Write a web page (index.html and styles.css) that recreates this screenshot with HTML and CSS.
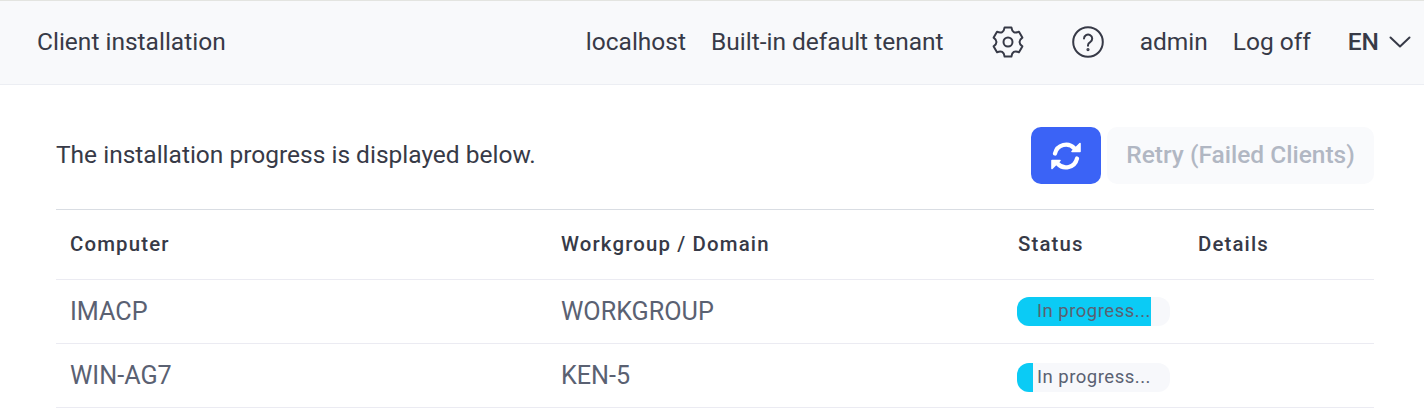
FILE: index.html
```html
<!DOCTYPE html>
<html lang="en">
<head>
<meta charset="utf-8">
<title>Client installation</title>
<link rel="stylesheet" href="styles.css">
</head>
<body>
<header class="topbar">
  <div class="topbar-title">Client installation</div>
  <nav class="topbar-nav">
    <span class="nav-host">localhost</span>
    <span class="nav-tenant">Built-in default tenant</span>
    <svg class="icon icon-gear" viewBox="0 0 40 40" fill="none" stroke="currentColor" stroke-width="2" stroke-linecap="round" stroke-linejoin="round"><path d="M16.6 5.4 23.4 5.4Q24.35 12.47 30.97 9.77L34.34 15.61Q28.7 20 34.34 24.39L30.97 30.23Q24.35 27.53 23.4 34.6L16.6 34.6Q15.65 27.53 9.03 30.23L5.66 24.39Q11.3 20 5.66 15.61L9.03 9.77Q15.65 12.47 16.6 5.4Z"/><circle cx="20" cy="20" r="4.500"/></svg>
    <svg class="icon icon-help" viewBox="0 0 32 32" fill="none" stroke="currentColor" stroke-width="2" stroke-linecap="round"><circle cx="16" cy="16" r="14.800"/><path d="M12 12.600a4.100 4.100 0 1 1 6.200 3.500c-1.300.8-2.200 1.600-2.200 3.200v.4"/><circle cx="16" cy="23.600" r=".6" fill="currentColor"/></svg>
    <span class="nav-user">admin</span>
    <span class="nav-logoff">Log off</span>
    <span class="nav-lang">EN</span>
    <svg class="icon-chevron" viewBox="0 0 22 12" fill="none" stroke="currentColor" stroke-width="2" stroke-linecap="round" stroke-linejoin="round"><path d="M1.500 1.500 11 10.500l9.500-9"/></svg>
  </nav>
</header>
<main class="content">
  <div class="toolbar">
    <p class="toolbar-text">The installation progress is displayed below.</p>
    <div class="toolbar-actions">
      <button class="btn btn-refresh" type="button" aria-label="Refresh">
        <svg viewBox="0 0 30 30" class="icon-sync"><path class="sync-arc" d="M4 12.500A11.300 11.300 0 0 1 23.500 7.500"/><path class="sync-arrow" d="M29 2.500V10.500H21Z"/><path class="sync-arc" d="M26 17.500A11.300 11.300 0 0 1 6.500 22.500"/><path class="sync-arrow" d="M1 27.500V19.500H9Z"/></svg>
      </button>
      <button class="btn btn-retry" type="button" disabled>Retry (Failed Clients)</button>
    </div>
  </div>
  <table class="clients">
    <thead>
      <tr><th class="col-computer">Computer</th><th class="col-group">Workgroup / Domain</th><th class="col-status">Status</th><th>Details</th></tr>
    </thead>
    <tbody>
      <tr>
        <td>IMACP</td><td>WORKGROUP</td>
        <td><div class="progress"><div class="progress-fill" style="width:87.6%"></div><span class="progress-label">In progress...</span></div></td>
        <td></td>
      </tr>
      <tr>
        <td>WIN-AG7</td><td>KEN-5</td>
        <td><div class="progress progress-low"><div class="progress-fill" style="width:10.5%"></div><span class="progress-label">In progress...</span></div></td>
        <td></td>
      </tr>
    </tbody>
  </table>
</main>
</body>
</html>
```
FILE: styles.css
```css
* { box-sizing: border-box; }
html, body { margin: 0; padding: 0; }
body {
  font-family: Roboto, "Liberation Sans", sans-serif;
  background: #fff;
  color: #373a47;
  height: 419px;
  overflow: hidden;
}
.topbar {
  height: 85px;
  background: #f8f9fb;
  border-top: 1px solid #e3e4e0;
  border-bottom: 1px solid #eceef3;
  display: flex;
  align-items: center;
  justify-content: space-between;
  padding: 0 0 3px 37px;
  font-size: 24.5px;
}
.topbar-nav { display: flex; align-items: center; }
.nav-host { margin-right: 25px; }
.nav-tenant { margin-right: 44px; }
.icon { display: block; flex: none; color: #373a47; margin-top: 2px; }
.icon-gear { width: 40px; height: 40px; margin-right: 44px; }
.icon-help { width: 32px; height: 32px; margin-right: 36px; }
.nav-user { margin-right: 25px; }
.nav-logoff { margin-right: 37px; }
.nav-lang { font-weight: 500; margin-right: 10px; }
.icon-chevron { width: 22px; height: 12px; margin: 2px 13px 0 0; display: block; }
.content { padding: 42px 50px 0 56px; }
.toolbar {
  height: 83px;
  display: flex;
  justify-content: space-between;
  align-items: flex-start;
  border-bottom: 1px solid #d9dde3;
}
.toolbar-text { margin: 0; font-size: 24.5px; line-height: 56px; color: #373a47; }
.toolbar-actions { display: flex; gap: 6px; }
.btn { height: 57px; border: 0; border-radius: 10px; font-family: inherit; padding: 0; }
.btn-refresh { width: 70px; background: #3b63f6; color: #fff; display: flex; align-items: center; justify-content: center; }
.icon-sync { width: 30px; height: 30px; display: block; }
.sync-arc { fill: none; stroke: currentColor; stroke-width: 4.200; stroke-linecap: round; }
.sync-arrow { fill: currentColor; stroke: currentColor; stroke-width: 1.600; stroke-linejoin: round; }
.btn-retry { width: 267px; background: #f9fafc; color: #b1b7c3; font-size: 24.5px; font-weight: 500; padding-bottom: 2px; }
.clients { width: 100%; border-collapse: collapse; table-layout: fixed; }
.clients th {
  height: 69px;
  padding: 0 14px;
  text-align: left;
  font-size: 20.4px;
  font-weight: 500;
  letter-spacing: 1.150px;
  color: #373a47;
  border-bottom: 1px solid #ebebf2;
}
.clients td {
  height: 64px;
  padding: 0 14px;
  font-size: 25.2px;
  color: #5a6172;
  border-bottom: 1px solid #ebebf2;
}
.col-computer { width: 491px; }
.col-group { width: 457px; }
.col-status { width: 180px; }
.progress {
  position: relative;
  width: 153px;
  height: 29px;
  margin-left: -1px;
  background: #f7f8fb;
  border-radius: 12px;
  overflow: hidden;
}
.progress-low { margin-top: 4px; }
.progress-fill { height: 100%; background: #0bcbf5; }
.progress-label {
  position: absolute;
  left: 20px;
  top: 0;
  line-height: 29px;
  font-size: 18.5px;
  letter-spacing: .5px;
  color: #5a6172;
}
```
